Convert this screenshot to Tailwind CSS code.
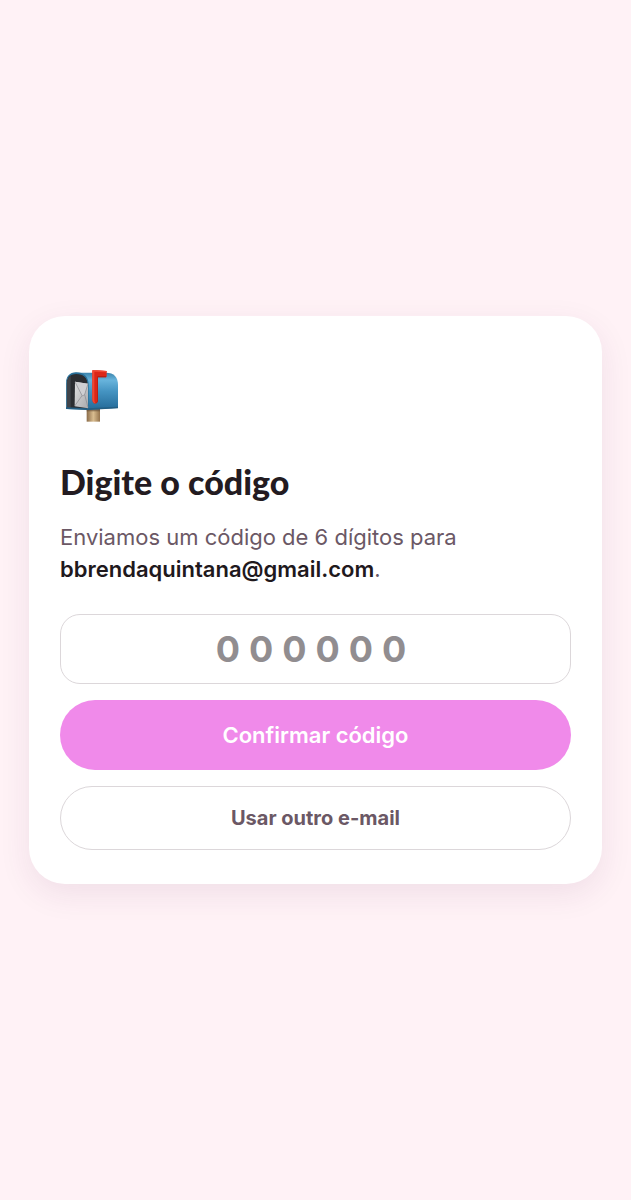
<!DOCTYPE html>
<html lang="pt-BR">

<head>
    <meta charset="UTF-8">
    <meta name="viewport" content="width=device-width, initial-scale=1.0">
    <title>Digite o código</title>
    <script src="https://cdn.jsdelivr.net/npm/@tailwindcss/browser@4"></script>
</head>

<body class="bg-[#fff2f6] font-[Inter,sans-serif]">
    <main class="flex min-h-screen items-center justify-center px-[29px]">
        <form class="w-full max-w-2xl rounded-[36px] bg-white px-[31px] pt-[50px] pb-[34px] shadow-[0_10px_32px_rgba(90,30,90,0.09)]">
            <!-- mailbox -->
            <svg class="size-[60px]" viewBox="24 18 180 180" aria-hidden="true">
                <defs>
                    <linearGradient id="box" x1="0" y1="0" x2="0" y2="1">
                        <stop offset="0" stop-color="#3a83ac" />
                        <stop offset="0.2" stop-color="#68b4dc" />
                        <stop offset="0.5" stop-color="#4594c2" />
                        <stop offset="1" stop-color="#246a98" />
                    </linearGradient>
                    <linearGradient id="post" x1="0" y1="0" x2="1" y2="0">
                        <stop offset="0" stop-color="#8a6b48" />
                        <stop offset="0.5" stop-color="#d9bd90" />
                        <stop offset="1" stop-color="#94734c" />
                    </linearGradient>
                    <linearGradient id="letter" x1="0" y1="0" x2="1" y2="1">
                        <stop offset="0" stop-color="#dededf" />
                        <stop offset="1" stop-color="#aaaaad" />
                    </linearGradient>
                </defs>
                <path d="M104 144h40v41h-40z" fill="url(#post)" />
                <path d="M104 147h40v7h-40z" fill="#66503a" opacity="0.6" />
                <path d="M72 38h90c24 0 36 14 36 36v66l-2 4-88 5-64-2V70c0-20 11-32 28-32z" fill="url(#box)" />
                <path d="M44 146V72c0-20 10-32 29-32s35 12 35 34v74z" fill="#2b2d31" />
                <path d="M44 145V72c0-12 5-20 12-25v98z" fill="#40444a" />
                <path d="M42 145V70c0-20 11-33 30-33 24 0 38 14 38 37v74h-3V74c0-20-13-32-34-32-19 0-29 11-29 29v74z" fill="#286f98" />
                <path d="M42 142l66 3 90-5v5l-90 5-66-3z" fill="#245e83" />
                <path d="M69 65l39 6v74l-40-6z" fill="url(#letter)" />
                <path d="M69 65l39 6-11 34-6 4z" fill="#cfcfd2" />
                <path d="M69 66l22 42 7-4 10-33M90 107l-22 31M98 104l10 38" fill="none" stroke="#88888e" stroke-width="2" />
                <path d="M121 31c14-1 28-1 43 2v17l-2 2h-24v67c0 8-4 12-9 12s-8-5-8-13z" fill="#dc2718" />
                <path d="M121 31l43 2v4l-37-2v82c0 6 1 10 3 13-5 0-9-5-9-13z" fill="#f04732" />
                <path d="M138 52h24v-3h-26v69c0 5-2 9-4 12 4-1 6-5 6-12z" fill="#b01c10" />
            </svg>

            <h1 class="mt-9 font-[Lato,sans-serif] text-[34px] leading-10 font-black text-[#231b21]">Digite o código</h1>
            <p class="mt-[19px] text-[22px] leading-8 text-[#6b5865]">
                Enviamos um código de 6 dígitos para
                <strong class="font-semibold text-[#1f191d]">bbrendaquintana@gmail.com</strong>.
            </p>

            <input class="mt-[29px] block h-[70px] w-full rounded-[20px] border border-[#dcd7da] text-center text-4xl font-bold tracking-[9px] text-[#231b21] placeholder:text-[#918d90]"
                type="text" inputmode="numeric" maxlength="6" placeholder="000000" aria-label="Código de 6 dígitos">
            <button class="mt-4 block h-[70px] w-full rounded-full bg-[#f08aea] text-[22px] font-semibold text-white" type="submit">Confirmar código</button>
            <button class="mt-4 block h-16 w-full rounded-full border border-[#dcd7da] text-xl font-bold text-[#6b5865]" type="button">Usar outro e-mail</button>
        </form>
    </main>
</body>

</html>
